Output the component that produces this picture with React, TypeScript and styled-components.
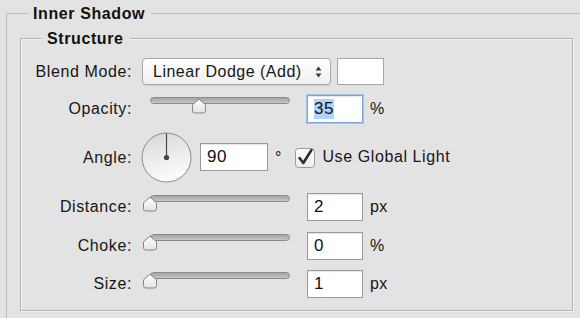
import React, { FC } from "react";
import styled, { createGlobalStyle } from "styled-components";

const GlobalStyle = createGlobalStyle`
  html, body {
    margin: 0;
    padding: 0;
    background: #e3e3e3;
    overflow: hidden;
  }
  body {
    font-family: "Liberation Sans", Arial, sans-serif;
    color: #161616;
  }
  #root {
    width: 580px;
    height: 318px;
    overflow: hidden;
  }
`;

const Page = styled.div`
  padding: 4px 0 0 6px;
`;

const Group = styled.fieldset`
  margin: 0;
  width: 620px;
  min-height: 340px;
  box-sizing: border-box;
  padding: 6px 0 0 13px;
  border: 1px solid #bdbdbd;
`;

const Section = styled.fieldset`
  margin: 0;
  width: 553px;
  box-sizing: border-box;
  padding: 4px 0 6px 0;
  border: 1px solid #b2b2b2;
  box-shadow: inset 1px 1px 0 #f2f2f2, 1px 1px 0 #f2f2f2;
`;

const Title = styled.legend<{ $indent: number }>`
  margin-left: ${(p) => p.$indent}px;
  padding: 0 6px 0 5px;
  font-size: 16px;
  font-weight: 700;
  letter-spacing: 0.6px;
  line-height: 19px;
  background: #e3e3e3;
  color: #111;
`;

const Form = styled.div`
  display: grid;
  grid-template-columns: 111px 1fr;
  grid-template-rows: 39px 36px 60px 40px 37px 40px;
  column-gap: 10px;
  align-items: center;
`;

const Label = styled.div<{ $nudge?: number }>`
  text-align: right;
  font-size: 16px;
  letter-spacing: 0.6px;
  white-space: nowrap;
  padding-top: ${(p) => p.$nudge ?? 0}px;
`;

const Controls = styled.div`
  display: flex;
  align-items: center;
`;

const Select = styled.div`
  width: 189px;
  height: 27px;
  box-sizing: border-box;
  display: flex;
  align-items: center;
  justify-content: space-between;
  padding: 0 8px 0 10px;
  border: 1px solid #a8a8a8;
  border-radius: 4px;
  background: linear-gradient(#ffffff, #f0f0f0);
  box-shadow: 0 1px 1px rgba(0, 0, 0, 0.08);
  font-size: 16px;
  letter-spacing: 0.5px;
`;

const Swatch = styled.div`
  width: 47px;
  height: 27px;
  box-sizing: border-box;
  margin-left: 6px;
  background: #ffffff;
  border: 1px solid #a6a6a6;
`;

const SliderBox = styled.div`
  position: relative;
  width: 156px;
  height: 17px;
  margin-bottom: 7px;
  flex: none;
`;

const Track = styled.div`
  position: absolute;
  left: 8px;
  right: 8px;
  top: 0;
  height: 7px;
  box-sizing: border-box;
  border: 1px solid #8a8a8a;
  border-radius: 4px;
  background: linear-gradient(#a4a4a4, #c6c6c6);
`;

const ThumbSvg = styled.svg`
  position: absolute;
  top: 1px;
`;

const NumberBox = styled.div<{ $width: number; $focused?: boolean }>`
  width: ${(p) => p.$width}px;
  height: 28px;
  box-sizing: border-box;
  margin-left: ${(p) => (p.$width > 60 ? 8 : 9)}px;
  display: flex;
  align-items: center;
  padding-left: 6px;
  background: #ffffff;
  border: 1px solid ${(p) => (p.$focused ? "#7fa4d8" : "#9a9a9a")};
  outline: ${(p) => (p.$focused ? "1px solid #a9c3ea" : "none")};
  box-shadow: inset 0 1px 1px rgba(0, 0, 0, 0.1);
  font-size: 17px;
  letter-spacing: 0.5px;
  color: #111;
`;

const Selected = styled.span`
  background: #b3d3fb;
`;

const Unit = styled.span`
  margin-left: 7px;
  font-size: 16px;
  letter-spacing: 0.4px;
`;

const Degree = styled.span`
  margin-left: 7px;
  font-size: 16px;
  align-self: flex-start;
  margin-top: 17px;
`;

const Dial = styled.svg`
  margin-left: -1px;
  flex: none;
`;

const CheckLabel = styled.label`
  display: flex;
  align-items: center;
  margin-left: 14px;
  font-size: 16px;
  letter-spacing: 0.6px;
  gap: 7px;
`;

const Slider: FC<{ value: number }> = ({ value }) => (
  <SliderBox>
    <Track />
    <ThumbSvg
      width="16"
      height="16"
      viewBox="0 0 16 16"
      style={{ left: `${(value / 100) * 140}px` }}
    >
      <defs>
        <linearGradient id="thumbFill" x1="0" y1="0" x2="0" y2="1">
          <stop offset="0" stopColor="#ffffff" />
          <stop offset="1" stopColor="#e2e2e2" />
        </linearGradient>
      </defs>
      <path
        d="M8 1.2 L14.5 6.8 L14.5 12.8 Q14.5 15 12.3 15 L3.7 15 Q1.5 15 1.5 12.8 L1.5 6.8 Z"
        fill="url(#thumbFill)"
        stroke="#858585"
        strokeWidth="1"
      />
    </ThumbSvg>
  </SliderBox>
);

const SelectArrows: FC = () => (
  <svg width="7" height="12" viewBox="0 0 7 12">
    <path d="M3.5 0.5 L6.5 4.5 L0.5 4.5 Z" fill="#3a3a3a" />
    <path d="M0.5 7.5 L6.5 7.5 L3.5 11.5 Z" fill="#3a3a3a" />
  </svg>
);

const Checkbox: FC = () => (
  <svg width="20" height="21" viewBox="0 0 20 21">
    <defs>
      <linearGradient id="boxFill" x1="0" y1="0" x2="0" y2="1">
        <stop offset="0" stopColor="#ffffff" />
        <stop offset="1" stopColor="#ececec" />
      </linearGradient>
    </defs>
    <rect x="0.5" y="1.5" width="19" height="19" rx="3" fill="url(#boxFill)" stroke="#9b9b9b" />
    <path
      d="M4.5 11 L8.3 16 L16.5 3"
      fill="none"
      stroke="#2e2e2e"
      strokeWidth="2.6"
      strokeLinecap="round"
      strokeLinejoin="round"
    />
  </svg>
);

const AngleDial: FC = () => (
  <Dial width="51" height="51" viewBox="0 0 51 51">
    <defs>
      <linearGradient id="dialFill" x1="0" y1="0" x2="0.3" y2="1">
        <stop offset="0" stopColor="#d6d6d6" />
        <stop offset="1" stopColor="#fbfbfb" />
      </linearGradient>
    </defs>
    <circle cx="25.5" cy="25.5" r="24.5" fill="url(#dialFill)" stroke="#8c8c8c" />
    <line x1="25.5" y1="25.5" x2="25.5" y2="1.5" stroke="#4a4a4a" strokeWidth="1.2" />
    <circle cx="25.5" cy="25.5" r="2.6" fill="#444" />
  </Dial>
);

const App: FC = () => (
  <>
    <GlobalStyle />
    <Page>
      <Group>
        <Title $indent={8}>Inner Shadow</Title>
        <Section>
          <Title $indent={21}>Structure</Title>
          <Form>
            <Label>Blend Mode:</Label>
            <Controls>
              <Select>
                Linear Dodge (Add)
                <SelectArrows />
              </Select>
              <Swatch />
            </Controls>

            <Label>Opacity:</Label>
            <Controls>
              <Slider value={35} />
              <NumberBox $width={56} $focused>
                <Selected>35</Selected>
              </NumberBox>
              <Unit>%</Unit>
            </Controls>

            <Label $nudge={2}>Angle:</Label>
            <Controls>
              <AngleDial />
              <NumberBox $width={68}>90</NumberBox>
              <Degree>°</Degree>
              <CheckLabel>
                <Checkbox />
                Use Global Light
              </CheckLabel>
            </Controls>

            <Label>Distance:</Label>
            <Controls>
              <Slider value={0} />
              <NumberBox $width={56}>2</NumberBox>
              <Unit>px</Unit>
            </Controls>

            <Label>Choke:</Label>
            <Controls>
              <Slider value={0} />
              <NumberBox $width={56}>0</NumberBox>
              <Unit>%</Unit>
            </Controls>

            <Label>Size:</Label>
            <Controls>
              <Slider value={0} />
              <NumberBox $width={56}>1</NumberBox>
              <Unit>px</Unit>
            </Controls>
          </Form>
        </Section>
      </Group>
    </Page>
  </>
);

export default App;
